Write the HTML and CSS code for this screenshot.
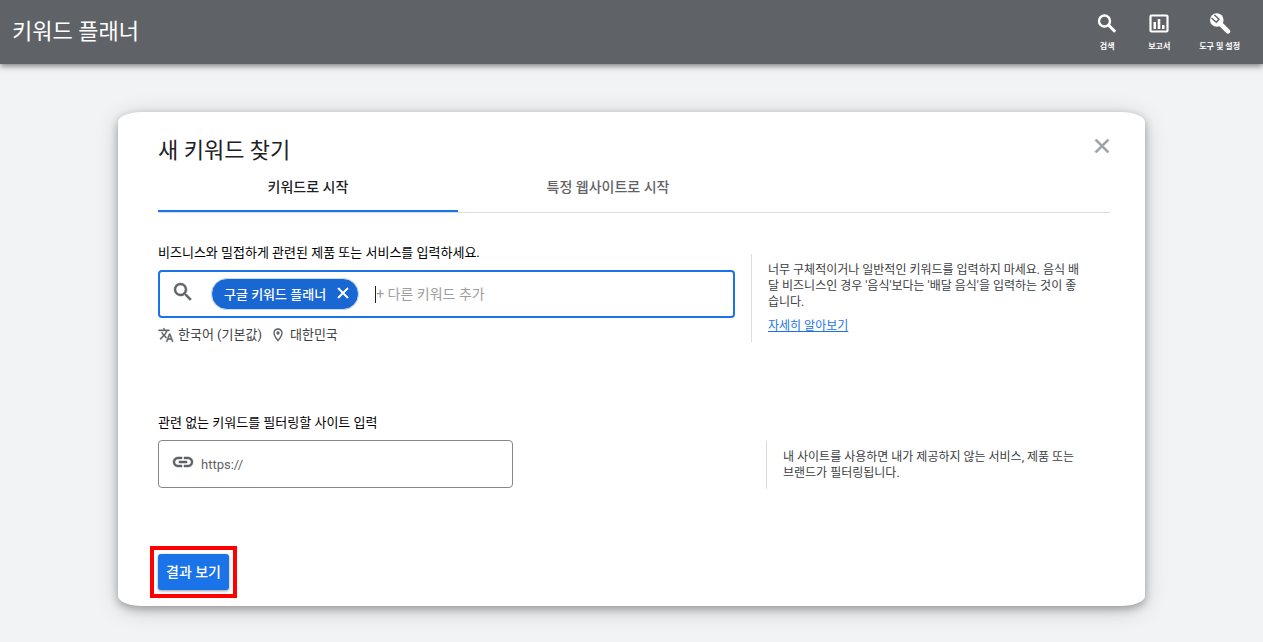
FILE: index.html
```html
<!DOCTYPE html>
<html lang="ko">
<head>
<meta charset="utf-8">
<meta name="viewport" content="width=device-width, initial-scale=1">
<title>키워드 플래너</title>
<link rel="stylesheet" href="styles.css">
</head>
<body>
<header class="topbar">
  <h1 class="topbar-title">키워드 플래너</h1>
  <nav class="topbar-nav">
    <button type="button" class="nav-button">
      <svg class="icon-24" viewBox="0 0 24 24"><circle cx="9.500" cy="9" r="5.500" fill="none" stroke="currentColor" stroke-width="2.400"/><path d="M13.500 13l6.700 6.700" stroke="currentColor" stroke-width="3"/></svg>
      <span>검색</span>
    </button>
    <button type="button" class="nav-button">
      <svg class="icon-24" viewBox="0 0 24 24"><rect x="3.500" y="3.500" width="17" height="16" rx="1" fill="none" stroke="currentColor" stroke-width="2.200"/><path d="M6.500 10H9v7H6.500zM10.700 7h2.600v10h-2.600zM15 13h2.500v4H15z"/></svg>
      <span>보고서</span>
    </button>
    <button type="button" class="nav-button">
      <svg class="icon-24" viewBox="0 0 24 24"><circle cx="8.800" cy="8" r="6.800"/><path d="M11 10.500l9 8.800" stroke="currentColor" stroke-width="4.600" stroke-linecap="round"/><path class="wrench-gap" d="M6.500 3L11 7.300 8.300 10.200 3.500 6"/></svg>
      <span>도구 및 설정</span>
    </button>
  </nav>
</header>

<main class="card">
  <div class="card-head">
    <h2 class="card-title">새 키워드 찾기</h2>
    <button type="button" class="close-button" aria-label="닫기">
      <svg class="icon-24" viewBox="0 0 24 24"><path stroke="currentColor" stroke-width=".6" d="M19 6.410L17.590 5 12 10.590 6.410 5 5 6.410 10.590 12 5 17.590 6.410 19 12 13.410 17.590 19 19 17.590 13.410 12z"/></svg>
    </button>
  </div>

  <div class="tabs" role="tablist">
    <button type="button" class="tab tab-active" role="tab" aria-selected="true">키워드로 시작</button>
    <button type="button" class="tab" role="tab" aria-selected="false">특정 웹사이트로 시작</button>
  </div>

  <section class="row row-keywords">
    <div class="field">
      <label class="field-label" for="keywords">비즈니스와 밀접하게 관련된 제품 또는 서비스를 입력하세요.</label>
      <div class="keyword-box">
        <svg class="icon-24 field-icon" viewBox="0 0 24 24"><path stroke="currentColor" stroke-width=".5" d="M15.500 14h-.79l-.28-.27A6.470 6.470 0 0 0 16 9.500 6.500 6.500 0 1 0 9.500 16c1.610 0 3.090-.59 4.230-1.570l.27.28v.79l5 4.990L20.490 19l-4.990-5zm-6 0C7.010 14 5 11.990 5 9.500S7.010 5 9.500 5 14 7.010 14 9.500 11.990 14 9.500 14z"/></svg>
        <span class="chip">
          <span>구글 키워드 플래너</span>
          <button type="button" class="chip-remove" aria-label="삭제">
            <svg class="icon-18" viewBox="0 0 24 24"><path stroke="currentColor" d="M19 6.410L17.590 5 12 10.590 6.410 5 5 6.410 10.590 12 5 17.590 6.410 19 12 13.410 17.590 19 19 17.590 13.410 12z"/></svg>
          </button>
        </span>
        <span class="caret"></span>
        <input class="keyword-input" id="keywords" type="text" placeholder="+ 다른 키워드 추가">
      </div>
      <div class="settings">
        <button type="button" class="setting">
          <svg class="icon-16" viewBox="0 0 24 24"><path stroke="currentColor" stroke-width=".5" d="M12.870 15.070l-2.540-2.510.03-.03A17.520 17.520 0 0 0 14.070 6H17V4h-7V2H8v2H1v1.990h11.170C11.500 7.920 10.440 9.750 9 11.350 8.070 10.320 7.300 9.190 6.690 8h-2c.73 1.630 1.730 3.170 2.980 4.560l-5.090 5.020L4 19l5-5 3.110 3.110.76-2.040zM18.500 10h-2L12 22h2l1.120-3h4.750L21 22h2l-4.500-12zm-2.620 7l1.620-4.330L19.120 17h-3.240z"/></svg>
          <span>한국어 (기본값)</span>
        </button>
        <button type="button" class="setting">
          <svg class="icon-16" viewBox="0 0 24 24"><path d="M12 2C8.130 2 5 5.130 5 9c0 5.250 7 13 7 13s7-7.750 7-13c0-3.870-3.130-7-7-7zM7 9c0-2.760 2.240-5 5-5s5 2.240 5 5c0 2.880-2.880 7.190-5 9.880C9.920 16.210 7 11.850 7 9z"/><circle cx="12" cy="9" r="2.500"/></svg>
          <span>대한민국</span>
        </button>
      </div>
    </div>
    <aside class="tip tip-keywords">
      <p>너무 구체적이거나 일반적인 키워드를 입력하지 마세요. 음식 배달 비즈니스인 경우 '음식'보다는 '배달 음식'을 입력하는 것이 좋습니다.</p>
      <a class="tip-link" href="#">자세히 알아보기</a>
    </aside>
  </section>

  <section class="row">
    <div class="field">
      <label class="field-label" for="site">관련 없는 키워드를 필터링할 사이트 입력</label>
      <div class="site-box">
        <svg class="icon-24 field-icon" viewBox="0 0 24 24"><path stroke="currentColor" stroke-width=".5" d="M3.900 12c0-1.710 1.390-3.100 3.100-3.100h4V7H7c-2.760 0-5 2.240-5 5s2.240 5 5 5h4v-1.900H7c-1.710 0-3.100-1.390-3.100-3.100zM8 13h8v-2H8v2zm9-6h-4v1.900h4c1.710 0 3.100 1.390 3.100 3.100s-1.390 3.100-3.100 3.100h-4V17h4c2.760 0 5-2.240 5-5s-2.240-5-5-5z"/></svg>
        <input class="site-input" id="site" type="text" placeholder="https://">
      </div>
    </div>
    <aside class="tip tip-site">
      <p>내 사이트를 사용하면 내가 제공하지 않는 서비스, 제품 또는 브랜드가 필터링됩니다.</p>
    </aside>
  </section>

  <div class="actions">
    <span class="highlight"><button type="button" class="submit">결과 보기</button></span>
  </div>
</main>
</body>
</html>
```
FILE: styles.css
```css
* {
  box-sizing: border-box;
}

body {
  margin: 0;
  min-height: 100vh;
  background: #f1f3f4;
  color: #202124;
  font-family: Roboto, "Noto Sans CJK KR", sans-serif;
  font-size: 13px;
}

h1, h2, p {
  margin: 0;
  font-weight: 400;
}

button, input {
  margin: 0;
  padding: 0;
  border: 0;
  background: none;
  color: inherit;
  font: inherit;
}

button {
  cursor: pointer;
}

input {
  min-width: 0;
  outline: 0;
}

svg {
  display: block;
  flex: none;
  fill: currentColor;
}

.icon-24 { width: 24px; height: 24px; }
.icon-18 { width: 18px; height: 18px; }
.icon-16 { width: 16px; height: 16px; }

.topbar {
  display: flex;
  align-items: center;
  justify-content: space-between;
  height: 64px;
  padding: 0 23px 0 12px;
  background: #5f6368;
  color: #fff;
  box-shadow: 0 2px 6px rgba(0, 0, 0, 0.5);
}

.topbar-title {
  font-size: 22px;
  line-height: 32px;
}

.topbar-nav {
  display: flex;
  gap: 28px;
}

.nav-button {
  display: flex;
  flex-direction: column;
  align-items: center;
  gap: 5px;
  font-size: 8px;
  font-weight: 700;
  line-height: 12px;
}

.wrench-gap {
  fill: none;
  stroke: #5f6368;
  stroke-width: 1.5;
}

.card {
  margin: 48px 118px 36px;
  padding: 20px 35px 16px 40px;
  border-radius: 24px / 10px;
  background: #fff;
  box-shadow: 0 3px 8px rgba(0, 0, 0, 0.3), 0 4px 24px rgba(0, 0, 0, 0.16);
}

.card-head {
  display: flex;
  align-items: flex-start;
  justify-content: space-between;
  height: 44px;
}

.card-title {
  font-size: 22px;
  line-height: 38px;
}

.close-button {
  margin: 2px -4px 0 0;
  color: #9aa0a6;
}

.tabs {
  display: flex;
  height: 37px;
  border-bottom: 1px solid #dadce0;
}

.tab {
  width: 300px;
  padding-bottom: 14px;
  border-bottom: 2px solid transparent;
  color: #5f6368;
  font-size: 14px;
  font-weight: 500;
}

.tab-active {
  border-color: #1a73e8;
  color: #202124;
}

.row {
  display: flex;
  justify-content: space-between;
}

.row-keywords {
  margin: 30px 0 68px;
}

.field {
  flex: 0 1 577px;
}

.field-label {
  display: block;
  margin-bottom: 7px;
  color: #000;
  line-height: 20px;
}

.keyword-box {
  display: flex;
  align-items: center;
  height: 48px;
  padding: 0 11px;
  border: 2px solid #1a73e8;
  border-radius: 4px;
  color: #5f6368;
}

.field-icon {
  margin-bottom: 4px;
}

.chip {
  display: flex;
  align-items: center;
  gap: 8px;
  height: 32px;
  margin: 0 16px;
  padding: 0 6px 2px 12px;
  border: 1px solid #c6dafc;
  border-radius: 16px;
  background: #1967d2;
  color: #fff;
  font-weight: 500;
  white-space: nowrap;
}

.caret {
  width: 1px;
  height: 17px;
  background: #202124;
}

.keyword-input {
  flex: 1;
  font-size: 14px;
}

.keyword-input::placeholder {
  color: #9e9e9e;
}

.settings {
  display: flex;
  gap: 8px;
  margin-top: 7px;
  color: #3c4043;
  line-height: 20px;
}

.setting {
  display: flex;
  align-items: center;
  gap: 4px;
}

.setting svg {
  color: #5f6368;
}

.tip {
  padding-left: 16px;
  border-left: 1px solid #dadce0;
  color: #3c4043;
  font-size: 12px;
  line-height: 16px;
}

.tip-keywords {
  flex: 0 0 359px;
  height: 88px;
  margin-top: 11px;
  padding-top: 8px;
  padding-right: 26px;
}

.tip-site {
  flex: 0 0 344px;
  height: 48px;
  margin-top: 28px;
  padding-top: 8px;
  padding-right: 26px;
}

.tip-link {
  display: inline-block;
  margin-top: 8px;
  color: #1a73e8;
}

.site-box {
  display: flex;
  align-items: center;
  gap: 6px;
  max-width: 355px;
  height: 48px;
  padding: 0 12px;
  border: 1px solid #80868b;
  border-radius: 4px;
  color: #5f6368;
}

.site-input {
  flex: 1;
}

.site-input::placeholder {
  color: #5f6368;
}

.actions {
  display: flex;
  margin-top: 65px;
}

.highlight {
  outline: 4px solid #f00;
  outline-offset: 4px;
}

.submit {
  display: block;
  height: 36px;
  padding: 0 8px 2px;
  border-radius: 3px;
  background: #1a73e8;
  box-shadow: 0 1px 3px rgba(0, 0, 0, 0.4);
  color: #fff;
  font-size: 14px;
  font-weight: 500;
}
```
